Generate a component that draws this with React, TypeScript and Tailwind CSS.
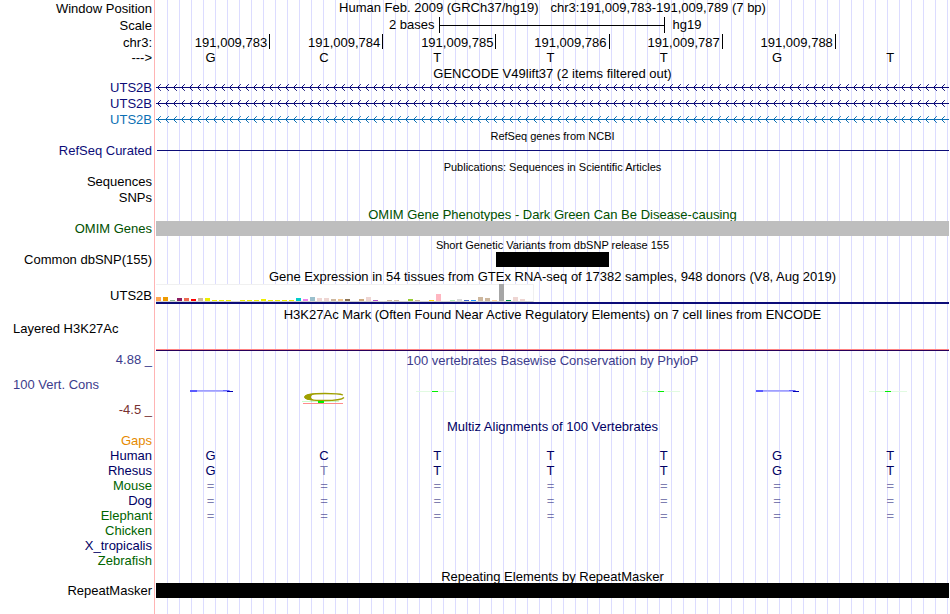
import type { ReactNode } from 'react';
import clsx from 'clsx';

interface RowProps {
  label?: ReactNode;
  className?: string;
  labelClass?: string;
  children?: ReactNode;
}

const POSITIONS = ['191,009,783', '191,009,784', '191,009,785', '191,009,786', '191,009,787', '191,009,788'];

const GENES = ['text-[#0c0c78]', 'text-[#0c0c78]', 'text-[#0c70b4]'];

// [height, color] for each GTEx tissue
const TISSUES: [number, string][] = [
  [4, '#ffa54f'], [4, '#ee9a00'], [1, '#8fbc8f'], [3, '#8b1c62'], [3, '#ee6a50'], [2, '#ff0000'],
  [3, '#cdb79e'], [3, '#eeee00'], [1, '#eeee00'], [1, '#eeee00'], [1, '#eeee00'], [0, '#eeee00'],
  [1, '#eeee00'], [1, '#eeee00'], [1, '#eeee00'], [2, '#eeee00'], [1, '#eeee00'], [1, '#eeee00'],
  [1, '#eeee00'], [1, '#eeee00'], [3, '#00cdcd'], [2, '#ee82ee'], [4, '#9ac0cd'], [3, '#eed5d2'],
  [3, '#eed5d2'], [2, '#cdb79e'], [2, '#eec591'], [2, '#8b7355'], [0, '#8b7355'], [2, '#cdaa7d'],
  [4, '#eed5d2'], [1, '#b452cd'], [0, '#7a378b'], [1, '#cdb79e'], [1, '#cdb79e'], [0, '#cdb79e'],
  [2, '#9acd32'], [1, '#cdb79e'], [0, '#7a67ee'], [1, '#ffd700'], [7, '#ffb6c1'], [0, '#cd9b1d'],
  [1, '#b4eeb4'], [2, '#d9d9d9'], [1, '#3a5fcd'], [1, '#1e90ff'], [4, '#cdb79e'], [3, '#cdb79e'],
  [1, '#ffd39b'], [17, '#a6a6a6'], [1, '#008b45'], [4, '#eed5d2'], [2, '#eed5d2'], [0, '#ff00ff'],
];

// lower case bases differ from the reference assembly
const SPECIES = [
  { name: 'Gaps', color: 'text-[#e68a00]', bases: '' },
  { name: 'Human', color: 'text-[#000064]', bases: 'GCTTTGT' },
  { name: 'Rhesus', color: 'text-[#000064]', bases: 'GtTTTGT' },
  { name: 'Mouse', color: 'text-[#006400]', bases: '=======' },
  { name: 'Dog', color: 'text-[#000064]', bases: '=======' },
  { name: 'Elephant', color: 'text-[#006400]', bases: '=======' },
  { name: 'Chicken', color: 'text-[#006400]', bases: '' },
  { name: 'X_tropicalis', color: 'text-[#000064]', bases: '' },
  { name: 'Zebrafish', color: 'text-[#006400]', bases: '' },
];

const LOGOS = ['G', 'C', 'T', '', 'T', 'G', 'T'];

function Row({ label, className = 'h-4', labelClass = 'text-right', children }: RowProps) {
  return (
    <div className={clsx('grid grid-cols-[152px_minmax(0,1fr)] gap-x-1', className)}>
      <div className={clsx('whitespace-nowrap', labelClass)}>{label}</div>
      <div className="min-w-0">{children}</div>
    </div>
  );
}

function Title({ className = 'h-[15px]', small, children }: { className?: string; small?: boolean; children: ReactNode }) {
  return (
    <Row className={className}>
      <h2 className={clsx('text-center whitespace-nowrap', small ? 'text-[11px]' : 'pt-px')}>{children}</h2>
    </Row>
  );
}

function Bases({ bases }: { bases: string }) {
  return (
    <div className="grid grid-cols-7 text-center">
      {bases.split('').map((base, i) => (
        <span key={i} className={clsx('pr-1', (base === '=' || base === 't') && 'opacity-50')}>
          {base.toUpperCase()}
        </span>
      ))}
    </div>
  );
}

function IntronLine({ id, className }: { id: string; className: string }) {
  return (
    <svg className={clsx('block h-[15px] w-full', className)} aria-hidden="true">
      <defs>
        <pattern id={id} width="8" height="15" patternUnits="userSpaceOnUse">
          <path d="M4.8 4.2 L1.5 7.5 L4.8 10.8" fill="none" stroke="currentColor" strokeWidth="1" />
        </pattern>
      </defs>
      <rect width="100%" height="15" fill={`url(#${id})`} />
      <rect width="100%" height="1" y="7" fill="currentColor" />
    </svg>
  );
}

function Logo({ base }: { base: string }) {
  return (
    <svg className="block h-[49px] w-full" aria-hidden="true">
      {base === 'G' && (
        <>
          <rect x="35" y="21" width="39" height="1" fill="#a0a0ff" />
          <rect x="35" y="22" width="38" height="1" fill="#b4b4ff" />
          <rect x="34" y="21" width="7" height="2" fill="#5a5aff" />
          <rect x="67" y="21" width="6" height="1" fill="#6464ff" />
          <rect x="71" y="22" width="6" height="1" fill="#0000b4" />
        </>
      )}
      {base === 'C' && (
        <>
          <path d="M74 26 Q70 24.5 56 24.5 Q36 24.5 36 28 Q36 31.5 56 31.5 Q72 31.5 75 28.5" fill="none" stroke="#a0a000" strokeWidth="1.3" />
          <path d="M35 28 Q36 25 46 24.5 Q38 28 46 31.5 Q36 31.5 35 28" fill="#a0a000" />
          <rect x="33" y="32" width="37" height="1" fill="#00f000" opacity="0.2" />
          <rect x="49" y="32" width="6" height="2" fill="#00f000" />
          <rect x="34" y="34" width="40" height="1" fill="#ff8c8c" />
        </>
      )}
      {base === 'T' && (
        <>
          <rect x="33" y="22" width="38" height="1" fill="#e1fae1" />
          <rect x="49" y="22" width="6" height="1" fill="#00f000" />
        </>
      )}
    </svg>
  );
}

export default function App() {
  return (
    <main className="min-h-screen bg-white bg-[linear-gradient(#ffb4b4,#ffb4b4),repeating-linear-gradient(to_right,transparent_0_11px,#dcdcff_11px_12px)] bg-[position:154px_0,156px_0] bg-[size:1px_100%,100%_100%] bg-no-repeat pr-px font-['Liberation_Sans',Arial,sans-serif] text-[13px] leading-4 text-black">
      <Row label="Window Position" className="h-[17px]" labelClass="pt-px text-right">
        <h1 className="flex justify-center gap-3 whitespace-nowrap">
          <span>Human Feb. 2009 (GRCh37/hg19)</span>
          <span>chr3:191,009,783-191,009,789 (7 bp)</span>
        </h1>
      </Row>
      <Row label="Scale" className="h-[17px]" labelClass="pt-px text-right">
        <div className="flex pl-0.5 whitespace-nowrap">
          <span className="flex-1 pr-1 text-right">2 bases</span>
          <span className="flex w-2/7 items-center border-x border-black">
            <span className="h-px w-full bg-black" />
          </span>
          <span className="flex-1 pl-2">hg19</span>
        </div>
      </Row>
      <Row label="chr3:" className="h-4" labelClass="pt-px text-right">
        <div className="grid grid-cols-7 pl-px">
          {POSITIONS.map((position) => (
            <span key={position} className="h-[15px] border-r border-black pt-px pr-0.5 text-right">
              {position}
            </span>
          ))}
        </div>
      </Row>
      <Row label="--->" className="h-[15px]">
        <Bases bases="GCTTTGT" />
      </Row>

      <Title>GENCODE V49lift37 (2 items filtered out)</Title>
      {GENES.map((color, i) => (
        <Row key={i} label="UTS2B" labelClass={clsx('text-right', color)}>
          <IntronLine id={`intron-${i}`} className={color} />
        </Row>
      ))}

      <Title small>RefSeq genes from NCBI</Title>
      <Row label="RefSeq Curated" labelClass="text-right text-[#0c0c78]">
        <div className="mt-[7px] ml-px h-px bg-[#0c0c78]" />
      </Row>

      <Title small>Publications: Sequences in Scientific Articles</Title>
      <Row label="Sequences" />
      <Row label="SNPs" />

      <Title className="h-[15px] text-[#005000]">OMIM Gene Phenotypes - Dark Green Can Be Disease-causing</Title>
      <Row label="OMIM Genes" className="h-[15px]" labelClass="text-right text-[#005000]">
        <div className="h-[15px] bg-[#bebebe]" />
      </Row>

      <Title className="h-4 pt-px" small>
        Short Genetic Variants from dbSNP release 155
      </Title>
      <Row label="Common dbSNP(155)" className="h-4">
        <div className="grid grid-cols-7">
          <div className="col-start-4 h-[15px] bg-black" />
        </div>
      </Row>

      <Title className="h-4">
        Gene Expression in 54 tissues from GTEx RNA-seq of 17382 samples, 948 donors (V8, Aug 2019)
      </Title>
      <Row label="UTS2B" className="h-5" labelClass="pt-1 text-right">
        <div className="border-b-2 border-[#0c0c78]">
          <div className="flex h-[18px] w-[378px] items-end gap-0.5 border-t border-r border-b border-[#f0f0f0] border-b-[#d2d2d2] bg-white">
            {TISSUES.map(([height, color], i) => (
              <div key={i} className="w-[5px] shrink-0" style={{ height, backgroundColor: color }} />
            ))}
          </div>
        </div>
      </Row>

      <Title className="h-4 pt-0.5">
        H3K27Ac Mark (Often Found Near Active Regulatory Elements) on 7 cell lines from ENCODE
      </Title>
      <Row label="Layered H3K27Ac" className="h-8" labelClass="pt-px pl-[13px]">
        <div className="h-[31px] border-b border-[#28005a]">
          <div className="h-[30px] border-b border-[#ff8080]" />
        </div>
      </Row>

      <Row label="4.88 _" className="h-[17px]" labelClass="text-right text-[#3c3c8c]">
        <h2 className="pt-px text-center whitespace-nowrap text-[#3c3c8c]">
          100 vertebrates Basewise Conservation by PhyloP
        </h2>
      </Row>
      <Row
        className="h-[49px]"
        labelClass="text-left"
        label={
          <>
            <div className="h-[33px] pt-2 pl-[13px] text-[#3c3c8c]">100 Vert. Cons</div>
            <div className="text-right text-[#783232]">-4.5 _</div>
          </>
        }
      >
        <div className="grid grid-cols-7">
          {LOGOS.map((base, i) => (
            <Logo key={i} base={base} />
          ))}
        </div>
      </Row>

      <Title className="h-[15px] text-[#000064]">Multiz Alignments of 100 Vertebrates</Title>
      {SPECIES.map((species) => (
        <Row key={species.name} label={species.name} className="h-[15px]" labelClass={clsx('text-right', species.color)}>
          <div className="text-[#000064]">
            <Bases bases={species.bases} />
          </div>
        </Row>
      ))}

      <Title>Repeating Elements by RepeatMasker</Title>
      <Row label="RepeatMasker" className="h-[15px]">
        <div className="h-[15px] bg-black" />
      </Row>
    </main>
  );
}
